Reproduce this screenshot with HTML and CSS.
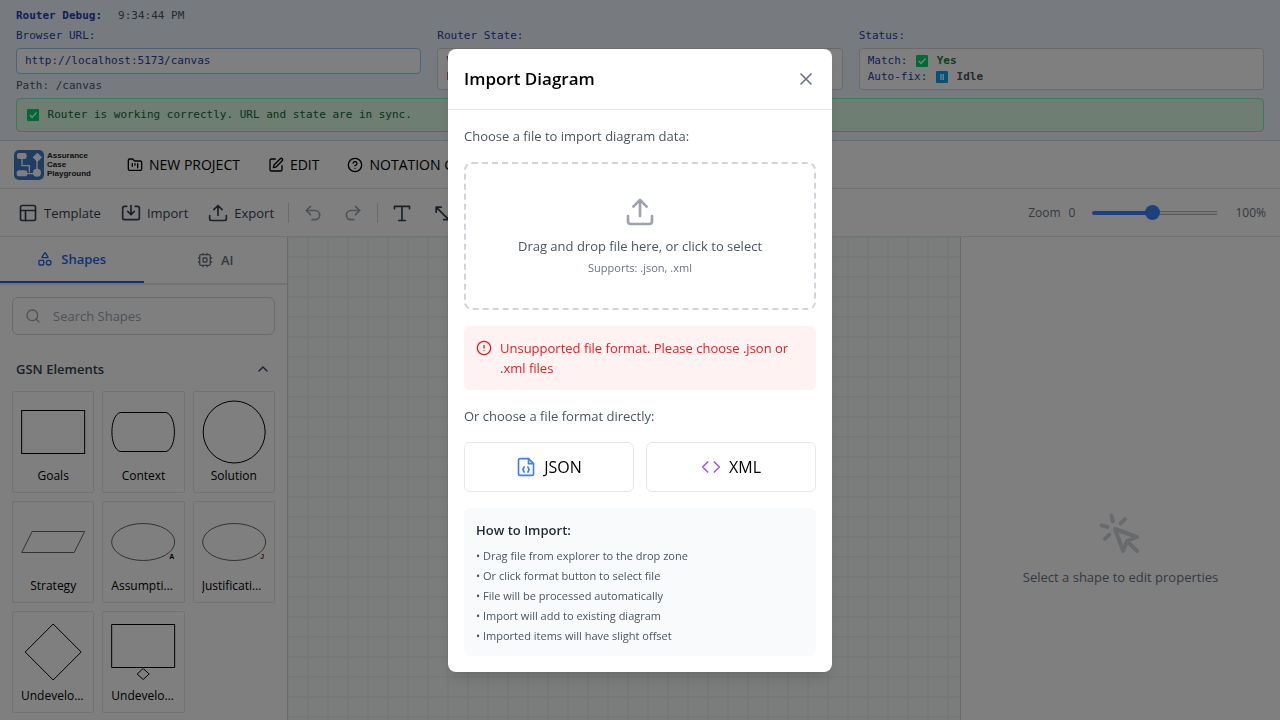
FILE: index.html
```html
<!DOCTYPE html>
<html lang="en">
<head>
<meta charset="utf-8">
<meta name="viewport" content="width=device-width, initial-scale=1">
<title>Assurance Case Playground</title>
<link rel="stylesheet" href="styles.css">
</head>
<body>
<section class="debug">
  <div class="debug-head"><strong>Router Debug:</strong><span class="muted">9:34:44 PM</span></div>
  <div class="debug-grid">
    <div class="debug-col">
      <div>Browser URL:</div>
      <div class="debug-box url">http://localhost:5173/canvas</div>
      <div class="muted">Path: /canvas</div>
    </div>
    <div class="debug-col">
      <div>Router State:</div>
      <div class="debug-box state"><div>View: canvas</div><div>Page: canvas</div></div>
    </div>
    <div class="debug-col">
      <div>Status:</div>
      <div class="debug-box">
        <div>Match: <svg class="mark" viewBox="0 0 16 12"><rect x="2" width="12" height="12" rx="1" fill="#00d26a"/><path d="M5 6l2 2.500 4.500-5" fill="none" stroke="#fff" stroke-width="1.300"/></svg> <strong class="ok">Yes</strong></div>
        <div>Auto-fix: <svg class="mark" viewBox="0 0 16 12"><rect x="2" width="12" height="12" rx="1" fill="#00a6ed"/><path d="M7 3v6M9.200 3v6" fill="none" stroke="#fff" stroke-width="1.300"/></svg> <strong class="muted">Idle</strong></div>
      </div>
    </div>
  </div>
  <div class="debug-ok"><svg class="mark" viewBox="0 0 16 12"><rect x="2" width="12" height="12" rx="1" fill="#00d26a"/><path d="M5 6l2 2.500 4.500-5" fill="none" stroke="#fff" stroke-width="1.300"/></svg> Router is working correctly. URL and state are in sync.</div>
</section>

<div class="app">
  <header class="topbar">
    <div class="brand">
      <svg class="brand-tile" viewBox="0 0 90 90">
        <rect width="90" height="90" rx="15" fill="#3b7cc4"/>
        <path d="M24 24v23h22v20M36 71h24M69 32v26" fill="none" stroke="#fff" stroke-width="4"/>
        <rect x="9" y="9" width="29" height="18" rx="6" fill="#fff"/>
        <path d="M70 8l14 14-14 14-14-14z" fill="#fff"/>
        <rect x="8" y="61" width="32" height="18" rx="8" fill="#fff"/>
        <circle cx="69" cy="68" r="12" fill="#fff"/>
      </svg>
      <div class="brand-name">Assurance<br>Case<br>Playground</div>
    </div>
    <nav class="menu">
      <button><svg class="i16" viewBox="0 0 24 24"><path d="M4 20h16a2 2 0 0 0 2-2V8a2 2 0 0 0-2-2h-7.930a2 2 0 0 1-1.660-.900l-.820-1.200A2 2 0 0 0 7.930 3H4a2 2 0 0 0-2 2v13c0 1.100.900 2 2 2Z"/><path d="M8 10v4M12 10v2M16 10v6"/></svg>NEW PROJECT</button>
      <button><svg class="i16" viewBox="0 0 24 24"><path d="M11 3H5a2 2 0 0 0-2 2v14a2 2 0 0 0 2 2h14a2 2 0 0 0 2-2v-6"/><path d="M18.400 2.600a2.120 2.120 0 0 1 3 3L12 15l-4 1 1-4z"/></svg>EDIT</button>
      <button><svg class="i16" viewBox="0 0 24 24"><circle cx="12" cy="12" r="10"/><path d="M9.090 9a3 3 0 0 1 5.830 1c0 2-3 3-3 3M12 17h.010"/></svg>NOTATION GUIDE</button>
    </nav>
  </header>

  <div class="toolbar">
    <div class="tools">
      <button><svg class="i20" viewBox="0 0 24 24"><rect x="3" y="3" width="18" height="18" rx="2"/><path d="M3 9h18M9 21V9"/></svg>Template</button>
      <button><svg class="i20" viewBox="0 0 24 24"><path d="M7 4H4a2 2 0 0 0-2 2v12a2 2 0 0 0 2 2h16a2 2 0 0 0 2-2V6a2 2 0 0 0-2-2h-3M12 3v11M8 10l4 4 4-4"/></svg>Import</button>
      <button><svg class="i20" viewBox="0 0 24 24"><path d="M2 15v4a2 2 0 0 0 2 2h16a2 2 0 0 0 2-2v-4M12 15V3M7 8l5-5 5 5"/></svg>Export</button>
      <span class="divider"></span>
      <button class="off" aria-label="Undo"><svg class="i20" viewBox="0 0 24 24"><path d="M9 14L4 9l5-5"/><path d="M4 9h10.500a5.500 5.500 0 0 1 0 11H11"/></svg></button>
      <button class="off" aria-label="Redo"><svg class="i20" viewBox="0 0 24 24"><path d="M15 14l5-5-5-5"/><path d="M20 9H9.500a5.500 5.500 0 0 0 0 11H13"/></svg></button>
      <span class="divider"></span>
      <button aria-label="Text"><svg class="i20" viewBox="0 0 24 24"><path d="M3 7V4h18v3M12 4v17M8 21h8"/></svg></button>
      <button aria-label="Line"><svg class="i20" viewBox="0 0 24 24"><path d="M5 11V5h6M5 5l15 15M20 14v6h-6"/></svg></button>
    </div>
    <div class="zoom">
      <label for="zoom">Zoom</label><span>0</span>
      <input id="zoom" type="range" min="10" max="200" value="100">
      <span>100%</span>
    </div>
  </div>

  <div class="work">
    <aside class="sidebar">
      <div class="tabs">
        <button class="tab active"><svg class="i16" viewBox="0 0 24 24"><path d="M8.300 10a.700.700 0 0 1-.626-1.079L11.400 3a.700.700 0 0 1 1.198-.043L16.300 8.900a.700.700 0 0 1-.572 1.100Z"/><rect x="3" y="14" width="7" height="7" rx="1"/><circle cx="17.500" cy="17.500" r="3.500"/></svg>Shapes</button>
        <button class="tab"><svg class="i16" viewBox="0 0 24 24"><rect x="4" y="4" width="16" height="16" rx="2"/><rect x="9" y="9" width="6" height="6" rx="1"/><path d="M9 2v2M15 2v2M9 20v2M15 20v2M2 9h2M2 15h2M20 9h2M20 15h2"/></svg>AI</button>
      </div>
      <div class="search">
        <svg class="i16" viewBox="0 0 24 24"><circle cx="11" cy="11" r="8"/><path d="M21 21l-4.300-4.300"/></svg>
        <input type="text" aria-label="Search Shapes" placeholder="Search Shapes">
      </div>
      <button class="group">GSN Elements<svg class="i16" viewBox="0 0 24 24"><path d="M6 15l6-6 6 6"/></svg></button>
      <div class="shapes">
        <button class="shape"><svg viewBox="0 0 64 64"><rect x=".5" y="10.500" width="63" height="43"/></svg><span>Goals</span></button>
        <button class="shape"><svg viewBox="0 0 64 64"><path d="M9 12.500h46c11 3 11 36 0 39H9c-11-3-11-36 0-39z"/></svg><span>Context</span></button>
        <button class="shape"><svg viewBox="0 0 64 64"><circle cx="32" cy="32" r="31"/></svg><span>Solution</span></button>
        <button class="shape"><svg class="light" viewBox="0 0 64 64"><path d="M11 21.500h52.500l-10.500 21H.5z"/></svg><span>Strategy</span></button>
        <button class="shape"><svg class="light" viewBox="0 0 64 64"><ellipse cx="32" cy="32" rx="31.500" ry="18.500"/><text x="58" y="49">A</text></svg><span>Assumption</span></button>
        <button class="shape"><svg class="light" viewBox="0 0 64 64"><ellipse cx="32" cy="32" rx="31.500" ry="18.500"/><text class="just" x="58" y="49">J</text></svg><span>Justification</span></button>
        <button class="shape"><svg viewBox="0 0 64 64"><path d="M32 4l28 28-28 28L4 32z"/></svg><span>Undeveloped</span></button>
        <button class="shape"><svg viewBox="0 0 64 64"><path d="M.5 4.500h63v43H.5zM32 48.500l6 5.500-6 5.500-6-5.500z"/></svg><span>Undeveloped</span></button>
      </div>
    </aside>
    <main class="canvas"></main>
    <aside class="props">
      <svg class="i48" viewBox="0 0 24 24"><path d="M15 15l-2 5L9 9l11 4-5 2zm0 0l5 5M7.188 2.239l.777 2.897M5.136 7.965l-2.898-.777M13.950 4.050l-2.122 2.122m-5.657 5.656l-2.120 2.122"/></svg>
      <p>Select a shape to edit properties</p>
    </aside>
  </div>
</div>

<div class="overlay">
  <div class="modal" role="dialog" aria-modal="true" aria-labelledby="modal-title">
    <div class="modal-head">
      <h2 id="modal-title">Import Diagram</h2>
      <button class="close" aria-label="Close"><svg class="i20" viewBox="0 0 24 24"><path d="M18 6L6 18M6 6l12 12"/></svg></button>
    </div>
    <div class="modal-body">
      <p class="lead">Choose a file to import diagram data:</p>
      <button class="drop">
        <svg class="i32" viewBox="0 0 24 24"><path d="M3 15v4a2 2 0 0 0 2 2h14a2 2 0 0 0 2-2v-4M12 15V3M7 8l5-5 5 5"/></svg>
        <span class="drop-main">Drag and drop file here, or click to select</span>
        <span class="drop-sub">Supports: .json, .xml</span>
      </button>
      <div class="error" role="alert">
        <svg class="i16" viewBox="0 0 24 24"><circle cx="12" cy="12" r="10"/><path d="M12 8v4M12 16h.010"/></svg>
        <p>Unsupported file format. Please choose .json or .xml files</p>
      </div>
      <p class="lead">Or choose a file format directly:</p>
      <div class="formats">
        <button><svg class="i20 json" viewBox="0 0 24 24"><path d="M15 2H5a2 2 0 0 0-2 2v16a2 2 0 0 0 2 2h14a2 2 0 0 0 2-2V8z"/><path d="M15 2v6h6"/><path d="M10 12a1 1 0 0 0-1 1v1a1 1 0 0 1-1 1 1 1 0 0 1 1 1v1a1 1 0 0 0 1 1M14 18a1 1 0 0 0 1-1v-1a1 1 0 0 1 1-1 1 1 0 0 1-1-1v-1a1 1 0 0 0-1-1"/></svg>JSON</button>
        <button><svg class="i20 xml" viewBox="0 0 24 24"><path d="M16 18l6-6-6-6M8 6l-6 6 6 6"/></svg>XML</button>
      </div>
      <div class="howto">
        <h3>How to Import:</h3>
        <ul>
          <li>• Drag file from explorer to the drop zone</li>
          <li>• Or click format button to select file</li>
          <li>• File will be processed automatically</li>
          <li>• Import will add to existing diagram</li>
          <li>• Imported items will have slight offset</li>
        </ul>
      </div>
    </div>
  </div>
</div>
</body>
</html>
```
FILE: styles.css
```css
* { box-sizing: border-box; margin: 0; padding: 0; }

body {
  height: 100vh;
  overflow: hidden;
  font: 13px/20px "Open Sans", "Noto Sans", sans-serif;
  color: #000;
  background: #fff;
}

button, input { font: inherit; color: inherit; background: none; border: 0; }
button { cursor: pointer; }
svg { flex-shrink: 0; }

.i16, .i20, .i32, .i48 {
  fill: none;
  stroke: currentColor;
  stroke-width: 2;
  stroke-linecap: round;
  stroke-linejoin: round;
}
.i16 { width: 16px; height: 16px; }
.i20 { width: 20px; height: 20px; }
.i32 { width: 32px; height: 32px; }
.i48 { width: 48px; height: 48px; }

/* Router debug strip */
.debug {
  padding: 8px 16px;
  background: #eff6ff;
  border-bottom: 1px solid #bfdbfe;
  color: #1e40af;
  font: 11px/16px "DejaVu Sans Mono", monospace;
}
.debug-head { display: flex; gap: 16px; margin-bottom: 4px; }
.debug-grid { display: grid; grid-template-columns: repeat(3, 1fr); gap: 16px; }
.debug-col { display: flex; flex-direction: column; gap: 4px; }
.debug-box { padding: 4px 8px; background: #fff; border: 1px solid #d1d5db; border-radius: 4px; }
.debug-box.url { border-color: #93c5fd; }
.debug-box.state { color: #6b21a8; }
.debug-ok {
  margin-top: 4px;
  padding: 8px;
  color: #166534;
  background: #dcfce7;
  border: 1px solid #86efac;
  border-radius: 4px;
}
.mark { width: 16px; height: 12px; vertical-align: -3px; }
.muted { color: #4b5563; }
.ok { color: #15803d; }

/* Application */
.app { display: flex; flex-direction: column; height: 100vh; }
.topbar, .toolbar {
  display: flex;
  align-items: center;
  flex-shrink: 0;
  height: 48px;
  border-bottom: 1px solid #e5e7eb;
}
.topbar { gap: 36px; padding: 0 14px; }
.brand { display: flex; align-items: center; gap: 3px; }
.brand-tile { width: 30px; height: 30px; }
.brand-name { font: bold 8px/9px "Liberation Sans", Arial, sans-serif; color: #222; }
.menu { display: flex; gap: 28px; }
.menu button {
  display: flex;
  align-items: center;
  gap: 6px;
  font-size: 14px;
  font-weight: 500;
  white-space: nowrap;
}

.toolbar { justify-content: space-between; padding: 0 14px 0 10px; color: #374151; }
.tools { display: flex; align-items: center; gap: 4px; }
.tools button { display: flex; align-items: center; gap: 6px; padding: 8px; }
.tools .off { color: #9ca3af; }
.divider { width: 1px; height: 20px; margin: 0 2px; background: #d1d5db; }
.zoom { display: flex; align-items: center; gap: 17px; font-size: 12px; color: #6b7280; }
.zoom label { margin-right: -9px; }
.zoom input {
  width: 126px;
  height: 4px;
  appearance: none;
  border-radius: 2px;
  background:
    linear-gradient(#3b82f6, #3b82f6) 0 0 / 48% 100% no-repeat,
    linear-gradient(#b2b2b2 1px, #efefef 1px, #efefef 3px, #b2b2b2 3px);
}
.zoom input::-webkit-slider-thumb {
  width: 15px;
  height: 15px;
  appearance: none;
  border-radius: 50%;
  background: #3b82f6;
}

.work { display: flex; flex: 1; min-height: 0; }
.sidebar { width: 288px; overflow: hidden; border-right: 1px solid #d1d5db; }
.tabs { display: flex; height: 48px; border-bottom: 2px solid #e5e7eb; }
.tab {
  display: flex;
  flex: 1;
  align-items: center;
  justify-content: center;
  gap: 8px;
  font-weight: 600;
  color: #6b7280;
}
.tab.active { color: #2563eb; border-bottom: 2px solid #2563eb; }
.search {
  display: flex;
  align-items: center;
  gap: 12px;
  height: 38px;
  margin: 12px;
  padding: 0 12px;
  color: #9ca3af;
  border: 1px solid #d1d5db;
  border-radius: 6px;
}
.search input { flex: 1; min-width: 0; outline: 0; }
.search input::placeholder { color: #9ca3af; }
.group {
  display: flex;
  align-items: center;
  justify-content: space-between;
  width: 100%;
  padding: 12px 16px;
  font-weight: 600;
  color: #374151;
}
.shapes { display: grid; grid-template-columns: repeat(3, 1fr); gap: 8px; padding: 0 12px; }
.shape {
  min-width: 0;
  padding: 8px;
  text-align: center;
  border: 1px solid #e5e7eb;
  border-radius: 2px;
}
.shape svg { display: block; width: 100%; height: 64px; fill: none; stroke: #000; overflow: visible; }
.shape .light { stroke: #666; }
.shape text { fill: #000; stroke: none; font: bold 7px "Liberation Sans", Arial, sans-serif; }
.shape .just { fill: #7c2d12; }
.shape span {
  display: block;
  margin-top: 4px;
  overflow: hidden;
  font-size: 12px;
  line-height: 16px;
  text-overflow: ellipsis;
  white-space: nowrap;
}
.canvas {
  flex: 1;
  background-color: #f7faf9;
  background-image:
    linear-gradient(#eef2f1 2px, transparent 2px),
    linear-gradient(90deg, #eef2f1 2px, transparent 2px);
  background-position: -1px -1px;
  background-size: 20px 20px;
}
.props {
  display: flex;
  flex-direction: column;
  align-items: center;
  justify-content: center;
  gap: 8px;
  width: 320px;
  color: #6b7280;
  border-left: 1px solid #d1d5db;
}
.props svg { color: #d1d5db; }

/* Import dialog */
.overlay {
  position: fixed;
  inset: 0;
  display: flex;
  align-items: center;
  justify-content: center;
  background: rgba(0, 0, 0, .5);
}
.modal {
  width: 384px;
  background: #fff;
  border-radius: 8px;
  box-shadow: 0 10px 15px -3px rgba(0, 0, 0, .1), 0 4px 6px -4px rgba(0, 0, 0, .1);
}
.modal-head {
  display: flex;
  align-items: center;
  justify-content: space-between;
  padding: 16px;
  border-bottom: 1px solid #e5e7eb;
}
.modal-head h2 { font-size: 17px; font-weight: 600; line-height: 28px; }
.close { display: flex; color: #6b7280; }
.modal-body { display: flex; flex-direction: column; gap: 16px; padding: 16px; color: #4b5563; }
.drop {
  display: flex;
  flex-direction: column;
  align-items: center;
  padding: 32px;
  border: 2px dashed #d1d5db;
  border-radius: 8px;
}
.drop svg { margin-bottom: 8px; color: #9ca3af; }
.drop-sub { margin-top: 4px; font-size: 11px; line-height: 16px; color: #6b7280; }
.error {
  display: flex;
  gap: 8px;
  padding: 12px;
  color: #dc2626;
  background: #fef2f2;
  border-radius: 6px;
}
.error svg { margin-top: 2px; }
.formats { display: grid; grid-template-columns: 1fr 1fr; gap: 12px; }
.formats button {
  display: flex;
  align-items: center;
  justify-content: center;
  gap: 8px;
  padding: 12px;
  font-size: 16px;
  line-height: 24px;
  color: #000;
  border: 1px solid #e5e7eb;
  border-radius: 6px;
}
.json { color: #3b82f6; }
.xml { color: #a855f7; }
.howto { padding: 12px; background: #f9fafb; border-radius: 6px; }
.howto h3 { margin-bottom: 8px; font-size: 13px; font-weight: 600; color: #1f2937; }
.howto ul { display: flex; flex-direction: column; gap: 4px; list-style: none; font-size: 11px; line-height: 16px; }
```
